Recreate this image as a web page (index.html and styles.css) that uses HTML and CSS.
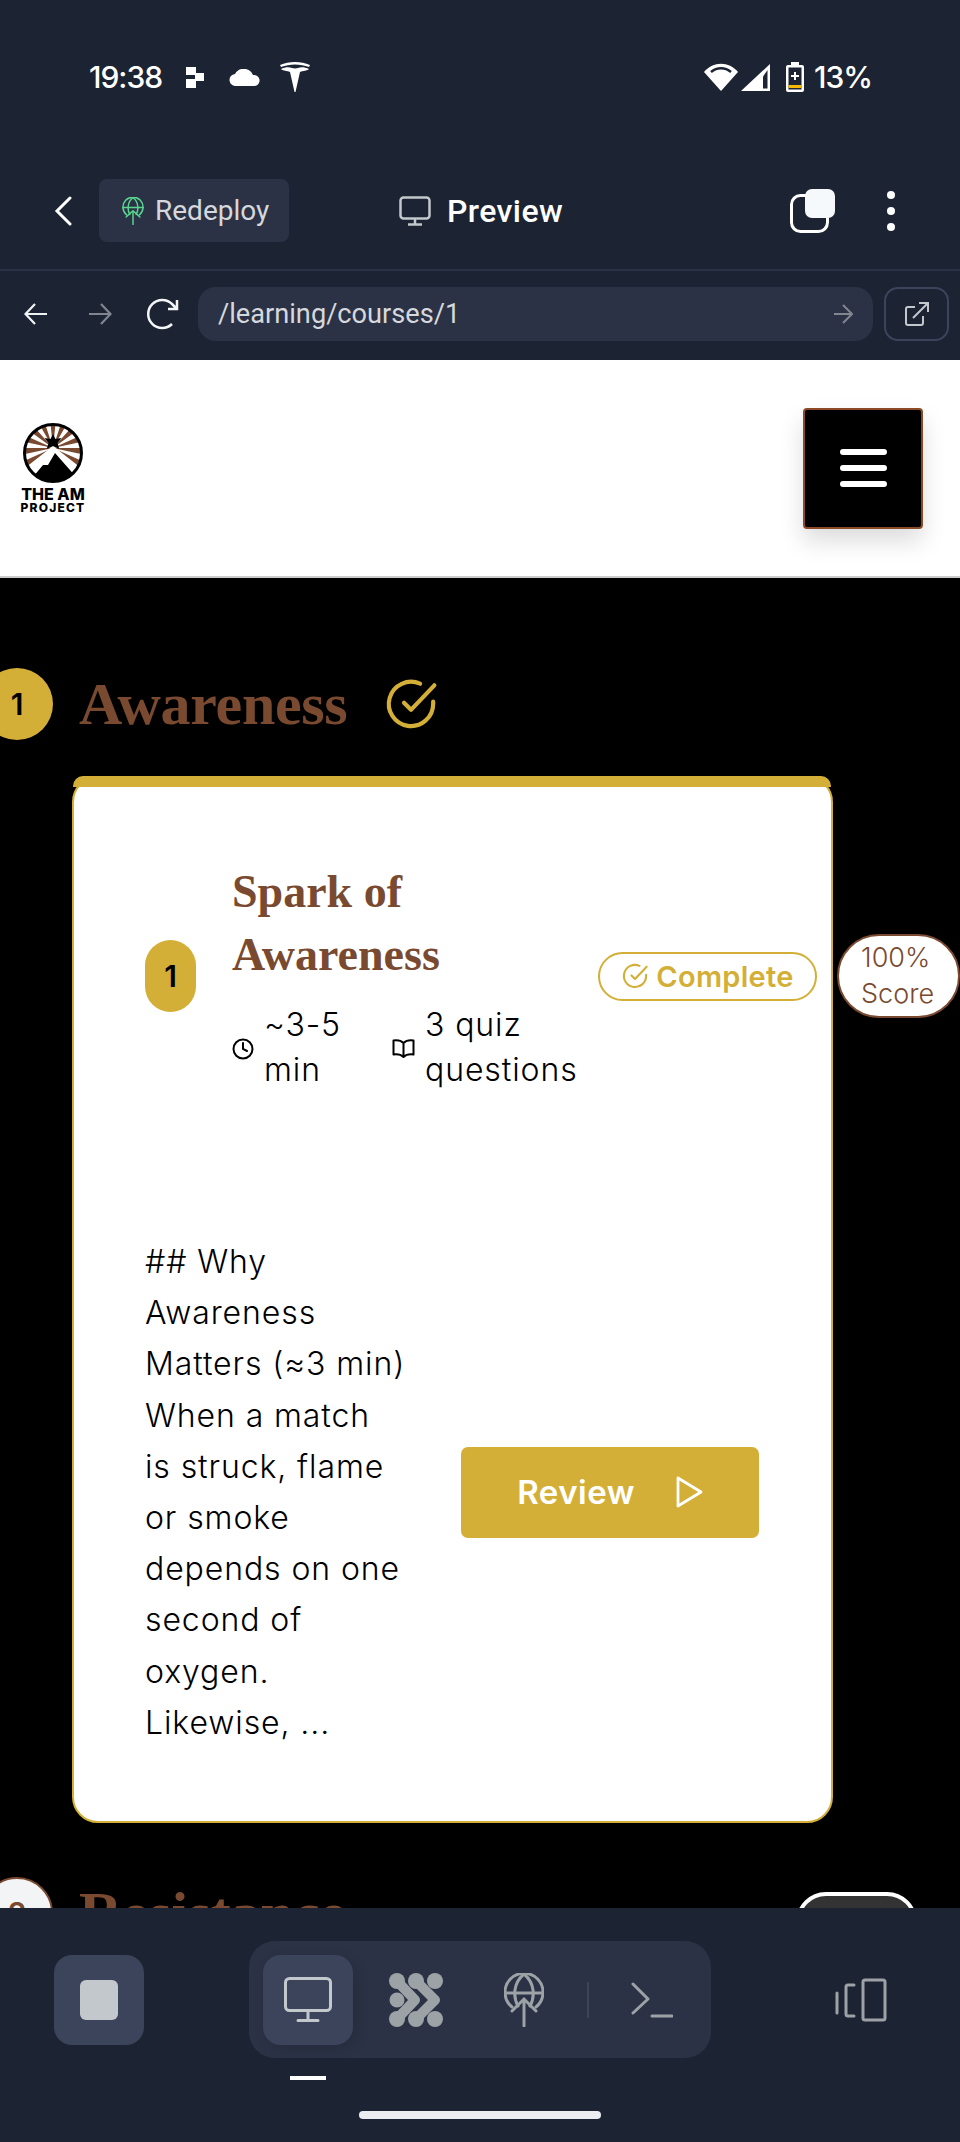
FILE: index.html
```html
<!DOCTYPE html>
<html>
    <head>
        <meta charset="UTF-8">
        <meta name="viewport" content="width=device-width, initial-scale=1.0">
        <title>Spark of Awareness</title>
        <link rel="stylesheet" href="styles.css">
    </head>

    <body>
        <div class="phone">
            <div class="statusbar">
                <span class="clock">19:38</span>
                <svg class="st-taxi" width="18" height="21" viewBox="0 0 18 21"><path d="M0 0h10v8H0zM9 6h9v8H9zM0 12h10v9H0z" fill="#fff"/></svg>
                <svg class="st-cloud" width="32" height="17" viewBox="0 0 32 17"><path d="M7 17a6 6 0 0 1-1-12 10 10 0 0 1 18 1 5.500 5.500 0 0 1 2 11z" fill="#fff"/></svg>
                <svg class="st-tesla" width="30" height="30" viewBox="0 0 30 30"><path d="M0 3C9-1 21-1 30 3l-1 2C20 1.500 10 1.500 1 5z" fill="#fff"/><path d="M1 7c4-2 8-2.500 11-1 2 .6 4 .6 6 0 3-1.500 7-1 11 1-2 2-6 1.500-9 3L15.500 30h-1L10 10C7 8.500 3 9 1 7z" fill="#fff"/></svg>
                <span class="status-spacer"></span>
                <svg width="34" height="28" viewBox="0 0 34 28"><path d="M17 28 0 9C9-2 25-2 34 9z" fill="#fff"/><path d="M7 9c6-5 14-5 20 0" fill="none" stroke="#1c2333" stroke-width="2.500"/></svg>
                <svg class="st-signal" width="29" height="27" viewBox="0 0 29 27"><path d="M0 27 29 0v27z" fill="#fff"/><path d="M22 12.500V24.500h4.500V6z" fill="#1c2333"/></svg>
                <svg class="st-batt" width="18" height="30" viewBox="0 0 18 30"><path d="M5 0h8v3h3a2 2 0 0 1 2 2v23a2 2 0 0 1-2 2H2a2 2 0 0 1-2-2V5a2 2 0 0 1 2-2h3z" fill="#fff"/><rect x="2.500" y="5.500" width="13" height="22" fill="#1c2333"/><rect x="2.500" y="23" width="13" height="3" fill="#f5b800"/><path d="M8 10h2v3h3v2h-3v3H8v-3H5v-2h3z" fill="#fff"/></svg>
                <span class="percent">13%</span>
            </div>

            <div class="appbar">
                <svg class="back" width="18" height="30" viewBox="0 0 18 30"><path d="M16 2 3 15l13 13" fill="none" stroke="#fff" stroke-width="3" stroke-linecap="round"/></svg>
                <div class="chip">
                    <svg width="22" height="28" viewBox="0 0 40 53"><g fill="none" stroke="#58d68d" stroke-width="2.800" stroke-linecap="round"><path d="M8 34a19 19 0 1 1 24 0"/><path d="M14 33C9 24 9 10 20 1c11 9 11 23 6 32"/><path d="M1 20h38M20 52V26M7 38l13-12 13 12"/></g></svg>
                    <span>Redeploy</span>
                </div>
                <div class="appbar-title">
                    <svg width="32" height="30" viewBox="0 0 32 30"><g fill="none" stroke="#c2c8cc" stroke-width="2.500"><rect x="1.500" y="1.500" width="29" height="21" rx="3"/><path d="M16 23v5M9 28.500h14"/></g></svg>
                    <span>Preview</span>
                </div>
                <svg class="tabs-icon" width="45" height="44" viewBox="0 0 45 44"><rect x="1.500" y="6.500" width="36" height="36" rx="9" fill="none" stroke="#fff" stroke-width="3"/><rect x="15" y="0" width="30" height="29" rx="7" fill="#f5f9fc"/></svg>
                <div class="dots"><i></i><i></i><i></i></div>
            </div>

            <div class="browserbar">
                <svg width="24" height="24" viewBox="0 0 24 24"><path d="M23 12H2M11 2 1.500 12 11 22" fill="none" stroke="#f0f2f4" stroke-width="2.200"/></svg>
                <svg class="forward" width="24" height="24" viewBox="0 0 24 24"><path d="M1 12h21M13 2l9.500 10L13 22" fill="none" stroke="#80858f" stroke-width="2.200"/></svg>
                <svg class="reload" width="34" height="32" viewBox="0 0 34 32"><path d="M26 26a14 14 0 1 1 0-20l5 5M31 2v9h-9" fill="none" stroke="#f5f6f7" stroke-width="2.500"/></svg>
                <div class="urlbar">
                    <span>/learning/courses/1</span>
                    <svg width="19" height="22" viewBox="0 0 19 22"><path d="M0 11h17M9 2l9 9-9 9" fill="none" stroke="#80858f" stroke-width="2"/></svg>
                </div>
                <div class="open-btn">
                    <svg width="24" height="24" viewBox="0 0 24 24"><path d="M10 5H3a2 2 0 0 0-2 2v14a2 2 0 0 0 2 2h13a2 2 0 0 0 2-2v-7M8 16 23 1M14 1h9v9" fill="none" stroke="#c2c8cc" stroke-width="2"/></svg>
                </div>
            </div>

            <nav class="sitenav">
                <div class="logo">
                    <svg width="60" height="62" viewBox="0 0 60 62">
                        <defs><clipPath id="logoclip"><circle cx="30" cy="31" r="29"/></clipPath></defs>
                        <circle cx="30" cy="31" r="29" fill="#fff"/>
                        <g clip-path="url(#logoclip)">
                            <path d="M30 26 26.700-6h6.600zM30 26l9.900-30.400L46-1.700zM30 26 51.400 2.200l4.500 5zM30 26 59.200 13l2.100 6.300zM30 26h32l-.7 6.700zM30 26l29.200 13-3.300 5.800zM30 26 20.100-4.400 14-1.700zM30 26 8.600 2.200l-4.500 5zM30 26 .8 13l-2.100 6.300zM30 26H-2l.7 6.700zM30 26 .8 39l3.300 5.800z" fill="#7a4a30"/>
                            <path d="M30 24 62 49v15H-2V49z" fill="#fff"/>
                            <path d="M10 55l10-12 5 0 7-12 22 25-8 8H15z" fill="#000"/>
                            <path d="M30 12l2.500 5 6-1-4 5 1.800 6-6.300-3-6.300 3 1.800-6-4-5 6 1z" fill="#000"/>
                        </g>
                        <circle cx="30" cy="31" r="28.500" fill="none" stroke="#000" stroke-width="3"/>
                    </svg>
                    <span class="logo-top">THE AM</span>
                    <span class="logo-bottom">PROJECT</span>
                </div>
                <button class="burger"><i></i><i></i><i></i></button>
            </nav>

            <main class="content">
                <div class="section-head">
                    <div class="section-num">1</div>
                    <h2>Awareness</h2>
                    <svg class="section-check" width="56" height="56" viewBox="0 0 24 24"><path d="M21.500 11v1a9.500 9.500 0 1 1-5.600-8.700M22 4 12 14.500l-3-3" fill="none" stroke="#d4af37" stroke-width="1.800" stroke-linecap="round" stroke-linejoin="round"/></svg>
                </div>

                <div class="card">
                    <div class="card-head">
                        <div class="lesson-num">1</div>
                        <div class="lesson-info">
                            <h3>Spark of<br>Awareness</h3>
                            <div class="meta">
                                <div class="meta-item meta-time">
                                    <svg width="22" height="22" viewBox="0 0 22 22"><g fill="none" stroke="#000" stroke-width="2" stroke-linecap="round"><circle cx="11" cy="11" r="9.500"/><path d="M11 5v6l4 2"/></g></svg>
                                    <span>~3-5<br>min</span>
                                </div>
                                <div class="meta-item">
                                    <svg width="23" height="22" viewBox="0 0 23 22"><path d="M11.500 5C9 2.500 5 2 1.500 2.500v14c3.500-.5 7.500 0 10 2.500 2.500-2.500 6.500-3 10-2.500v-14C18 2 14 2.500 11.500 5zv14" fill="none" stroke="#000" stroke-width="2" stroke-linejoin="round"/></svg>
                                    <span>3 quiz<br>questions</span>
                                </div>
                            </div>
                        </div>
                        <div class="complete">
                            <svg width="28" height="28" viewBox="0 0 24 24"><path d="M21.500 11v1a9.500 9.500 0 1 1-5.600-8.700M22 4 12 14.500l-3-3" fill="none" stroke="#d4af37" stroke-width="1.800" stroke-linecap="round" stroke-linejoin="round"/></svg>
                            <span>Complete</span>
                        </div>
                        <div class="score">100%<br>Score</div>
                    </div>

                    <div class="card-body">
                        <p>## Why<br>Awareness<br>Matters (≈3 min)<br>When a match<br>is struck, flame<br>or smoke<br>depends on one<br>second of<br>oxygen.<br>Likewise, ...</p>
                        <button class="review">
                            <span>Review</span>
                            <svg width="28" height="32" viewBox="0 0 28 32"><path d="M3 2l23 14L3 30z" fill="none" stroke="#fff" stroke-width="2.800" stroke-linejoin="round"/></svg>
                        </button>
                    </div>
                </div>

                <div class="section-head next-section">
                    <div class="section-num section-num-open">2</div>
                    <h2>Resistance</h2>
                    <div class="locked"></div>
                </div>
            </main>

            <div class="dock">
                <div class="dock-row">
                    <button class="stop"><i></i></button>
                    <div class="dock-tabs">
                        <div class="dock-tab dock-tab-on">
                            <svg width="48" height="46" viewBox="0 0 48 46"><g fill="none" stroke="#c2c8cc" stroke-width="3" stroke-linecap="round"><rect x="1.500" y="1.500" width="45" height="32" rx="4"/><path d="M24 34v9M14 43.500h20"/></g></svg>
                        </div>
                        <div class="dock-tab">
                            <svg width="54" height="54" viewBox="0 0 54 54"><g fill="#9da2a6"><circle cx="46" cy="8" r="8"/><circle cx="8" cy="27" r="7.500"/><circle cx="46" cy="46" r="8"/><circle cx="8" cy="8" r="8"/><circle cx="27" cy="8" r="8"/><circle cx="8" cy="46" r="8"/><circle cx="27" cy="46" r="8"/></g><g fill="none" stroke="#9da2a6" stroke-width="10" stroke-linecap="round" stroke-linejoin="round"><path d="M8 8 26 27 8 46"/><path d="M27 8 46 27 27 46"/></g></svg>
                        </div>
                        <div class="dock-tab">
                            <svg width="40" height="54" viewBox="0 0 40 54"><g fill="none" stroke="#9da2a6" stroke-width="3" stroke-linecap="round"><path d="M8 34a19 19 0 1 1 24 0"/><path d="M14 33C9 24 9 10 20 1c11 9 11 23 6 32"/><path d="M1 20h38M20 53V27M8 38l12-12 12 12"/></g></svg>
                        </div>
                        <div class="dock-sep"></div>
                        <div class="dock-tab">
                            <svg width="42" height="36" viewBox="0 0 42 36"><path d="M2 2l15 15L2 31M21 34h20" fill="none" stroke="#9da2a6" stroke-width="3" stroke-linecap="round" stroke-linejoin="round"/></svg>
                        </div>
                    </div>
                    <svg class="dock-device" width="52" height="44" viewBox="0 0 52 44"><g fill="none" stroke="#9da2a6" stroke-width="3" stroke-linecap="round" stroke-linejoin="round"><rect x="28" y="2" width="22" height="40" rx="2"/><path d="M19 7h-6a2 2 0 0 0-2 2v27a2 2 0 0 0 2 2h6M2 15v20"/></g></svg>
                </div>
                <div class="dock-marker"></div>
                <div class="homebar"></div>
            </div>
        </div>
    </body>
</html>
```

FILE: styles.css
```css
body{
    margin: 0;
    background-color: #000;
}
.phone{
    width: 960px;
    height: 2142px;
    display: flex;
    flex-direction: column;
    overflow: hidden;
    font-family: "Inter", sans-serif;
}
.statusbar{
    height: 152px;
    flex: none;
    box-sizing: border-box;
    display: flex;
    align-items: center;
    padding: 2px 88px 0 89px;
    background-color: #1c2333;
    color: #fff;
}
.clock{
    font-size: 30px;
    font-weight: 500;
    letter-spacing: -1px;
    margin-right: 24px;
}
.st-cloud{
    margin-left: 25px;
}
.st-tesla{
    margin-left: 19px;
}
.status-spacer{
    flex: 1;
}
.st-signal{
    margin-left: 3px;
}
.st-batt{
    margin-left: 16px;
}
.percent{
    font-size: 30px;
    font-weight: 500;
    letter-spacing: -1px;
    margin-left: 10px;
}
.appbar{
    height: 117px;
    flex: none;
    display: flex;
    align-items: center;
    padding: 0 65px 0 54px;
    background-color: #1c2333;
    border-bottom: 2px solid #2b3245;
}
.chip{
    width: 190px;
    height: 63px;
    margin-left: 27px;
    box-sizing: border-box;
    padding-left: 23px;
    display: flex;
    align-items: center;
    gap: 11px;
    background-color: #2b3245;
    border-radius: 8px;
    color: #d5d8dc;
    font-family: "Roboto", sans-serif;
    font-size: 28px;
}
.appbar-title{
    display: flex;
    align-items: center;
    gap: 16px;
    margin-left: 110px;
    color: #fff;
    font-family: "Roboto", sans-serif;
    font-size: 32px;
    font-weight: 500;
    letter-spacing: 0.4px;
}
.tabs-icon{
    margin-left: auto;
}
.dots{
    display: flex;
    flex-direction: column;
    gap: 8px;
    margin-left: 52px;
}
.dots i{
    width: 8px;
    height: 8px;
    border-radius: 50%;
    background-color: #fff;
}
.browserbar{
    height: 89px;
    flex: none;
    box-sizing: border-box;
    padding: 0 11px 3px 24px;
    display: flex;
    align-items: center;
    background-color: #1c2333;
}
.forward{
    margin-left: 40px;
}
.reload{
    margin-left: 34px;
}
.urlbar{
    width: 675px;
    height: 54px;
    margin-left: 18px;
    box-sizing: border-box;
    padding: 0 20px;
    display: flex;
    align-items: center;
    justify-content: space-between;
    background-color: #2b3245;
    border-radius: 18px;
    color: #d5d8dc;
    font-family: "Roboto", sans-serif;
    font-size: 27.200px;
}
.open-btn{
    width: 65px;
    height: 54px;
    margin-left: 11px;
    box-sizing: border-box;
    display: flex;
    align-items: center;
    justify-content: center;
    border: 2px solid #3c445c;
    border-radius: 14px;
}
.sitenav{
    height: 218px;
    flex: none;
    box-sizing: border-box;
    padding: 0 37px 0 20px;
    display: flex;
    align-items: center;
    justify-content: space-between;
    background-color: #fff;
    border-bottom: 2px solid #ccc;
}
.logo{
    display: flex;
    flex-direction: column;
    align-items: center;
    width: 66px;
    font-family: "Inter", sans-serif;
    font-weight: 800;
    color: #000;
}
.logo-top{
    font-size: 16px;
    line-height: 16px;
    margin-top: 2px;
    white-space: nowrap;
}
.logo-bottom{
    font-size: 12px;
    line-height: 12px;
    letter-spacing: 1.200px;
    white-space: nowrap;
}
.burger{
    width: 120px;
    height: 121px;
    padding: 0;
    display: flex;
    flex-direction: column;
    align-items: center;
    justify-content: center;
    gap: 10px;
    background-color: #000;
    border: 2px solid #8b4a25;
    border-radius: 4px;
    box-shadow: 0 12px 24px rgba(0, 0, 0, 0.14);
}
.burger i{
    width: 47px;
    height: 6px;
    border-radius: 3px;
    background-color: #fff;
}
.content{
    flex: 1;
    min-height: 0;
    overflow: hidden;
    padding-top: 90px;
    background-color: #000;
}
.section-head{
    height: 72px;
    margin-left: -19px;
    padding-right: 43px;
    display: flex;
    align-items: center;
}
.section-num{
    width: 72px;
    height: 72px;
    flex: none;
    display: flex;
    align-items: center;
    justify-content: center;
    background-color: #d4af37;
    border-radius: 50%;
    color: #000;
    font-size: 30px;
    font-weight: 600;
}
.section-num-open{
    box-sizing: border-box;
    background-color: #f3f4f6;
    border: 2px solid #7a4a30;
    color: #7a4a30;
}
.section-head h2{
    margin: 0 0 0 26px;
    font-family: "Liberation Serif", serif;
    font-size: 60px;
    font-weight: bold;
    letter-spacing: -0.3px;
    color: #7a4a30;
}
.section-check{
    margin-left: 36px;
}
.next-section{
    margin-top: 54px;
}
.locked{
    width: 121px;
    height: 42px;
    margin-left: auto;
    box-sizing: border-box;
    background-color: #333;
    border: 4px solid #fff;
    border-radius: 30px 30px 0 0;
}
.card{
    position: relative;
    width: 761px;
    height: 1047px;
    margin: 36px 0 0 72px;
    box-sizing: border-box;
    padding: 82px 0 0 71px;
    background-color: #fff;
    border: 2px solid #d4af37;
    border-radius: 26px;
}
.card::before{
    content: "";
    position: absolute;
    top: -2px;
    left: -1px;
    right: 0;
    height: 11px;
    background-color: #d4af37;
    border-radius: 10px 10px 0 0;
}
.card-head{
    display: flex;
    align-items: center;
}
.lesson-num{
    width: 51px;
    height: 72px;
    flex: none;
    display: flex;
    align-items: center;
    justify-content: center;
    background-color: #d4af37;
    border-radius: 26px;
    color: #000;
    font-size: 30px;
    font-weight: 600;
}
.lesson-info{
    width: 365px;
    flex: none;
    margin-left: 36px;
}
.lesson-info h3{
    margin: 0 0 16px;
    font-family: "Liberation Serif", serif;
    font-size: 46px;
    font-weight: bold;
    line-height: 63px;
    color: #7a4a30;
}
.meta{
    display: flex;
    font-size: 32px;
    font-weight: 300;
    letter-spacing: 0.9px;
    line-height: 45px;
    color: #000;
}
.meta-item{
    display: flex;
    align-items: center;
    gap: 10px;
}
.meta-item svg{
    flex: none;
    margin-top: 4px;
}
.meta-time{
    width: 160px;
}
.complete{
    width: 219px;
    height: 49px;
    flex: none;
    margin-left: 1px;
    box-sizing: border-box;
    display: flex;
    align-items: center;
    justify-content: center;
    gap: 7px;
    border: 2px solid #d4af37;
    border-radius: 25px;
    color: #d4af37;
    font-size: 29px;
    font-weight: 600;
    letter-spacing: 0.3px;
}
.score{
    width: 123px;
    height: 84px;
    flex: none;
    margin-left: 20px;
    box-sizing: border-box;
    padding-left: 22px;
    display: flex;
    align-items: center;
    background-color: #fff;
    border: 2px solid #7a4a30;
    border-radius: 42px;
    color: #7a4a30;
    font-size: 27px;
    line-height: 36px;
    font-weight: 300;
    flex-wrap: wrap;
    align-content: center;
}
.card-body{
    margin-top: 144px;
    display: flex;
    align-items: center;
}
.card-body p{
    width: 316px;
    margin: 0;
    flex: none;
    font-size: 32px;
    font-weight: 300;
    letter-spacing: 0.9px;
    line-height: 51.200px;
    color: #000;
}
.review{
    width: 298px;
    height: 91px;
    display: flex;
    align-items: center;
    justify-content: center;
    gap: 40px;
    background-color: #d4af37;
    border: none;
    border-radius: 7px;
    color: #fff;
    font-family: "Inter", sans-serif;
    font-size: 33px;
    font-weight: 600;
    letter-spacing: 0.5px;
}
.dock{
    height: 234px;
    flex: none;
    box-sizing: border-box;
    padding-top: 33px;
    background-color: #1c2333;
}
.dock-row{
    height: 117px;
    padding: 0 73px 0 54px;
    display: flex;
    align-items: center;
}
.stop{
    width: 90px;
    height: 90px;
    padding: 0;
    display: flex;
    align-items: center;
    justify-content: center;
    background-color: #3c445c;
    border: none;
    border-radius: 18px;
}
.stop i{
    width: 38px;
    height: 40px;
    background-color: #c2c8cc;
    border-radius: 6px;
}
.dock-tabs{
    width: 462px;
    height: 117px;
    margin-left: 105px;
    box-sizing: border-box;
    padding: 0 14px;
    display: flex;
    align-items: center;
    gap: 18px;
    background-color: #2b3245;
    border-radius: 26px;
}
.dock-tab{
    width: 90px;
    height: 90px;
    flex: none;
    display: flex;
    align-items: center;
    justify-content: center;
    border-radius: 18px;
}
.dock-tab-on{
    background-color: #3c445c;
    box-shadow: 4px 4px 14px rgba(0, 0, 0, 0.12);
}
.dock-sep{
    width: 2px;
    height: 36px;
    flex: none;
    background-color: #3c445c;
}
.dock-device{
    margin-left: auto;
}
.dock-marker{
    width: 36px;
    height: 4px;
    margin: 18px 0 0 290px;
    background-color: #fff;
}
.homebar{
    width: 242px;
    height: 8px;
    margin: 31px auto 0;
    background-color: #ebedf0;
    border-radius: 4px;
}
```
